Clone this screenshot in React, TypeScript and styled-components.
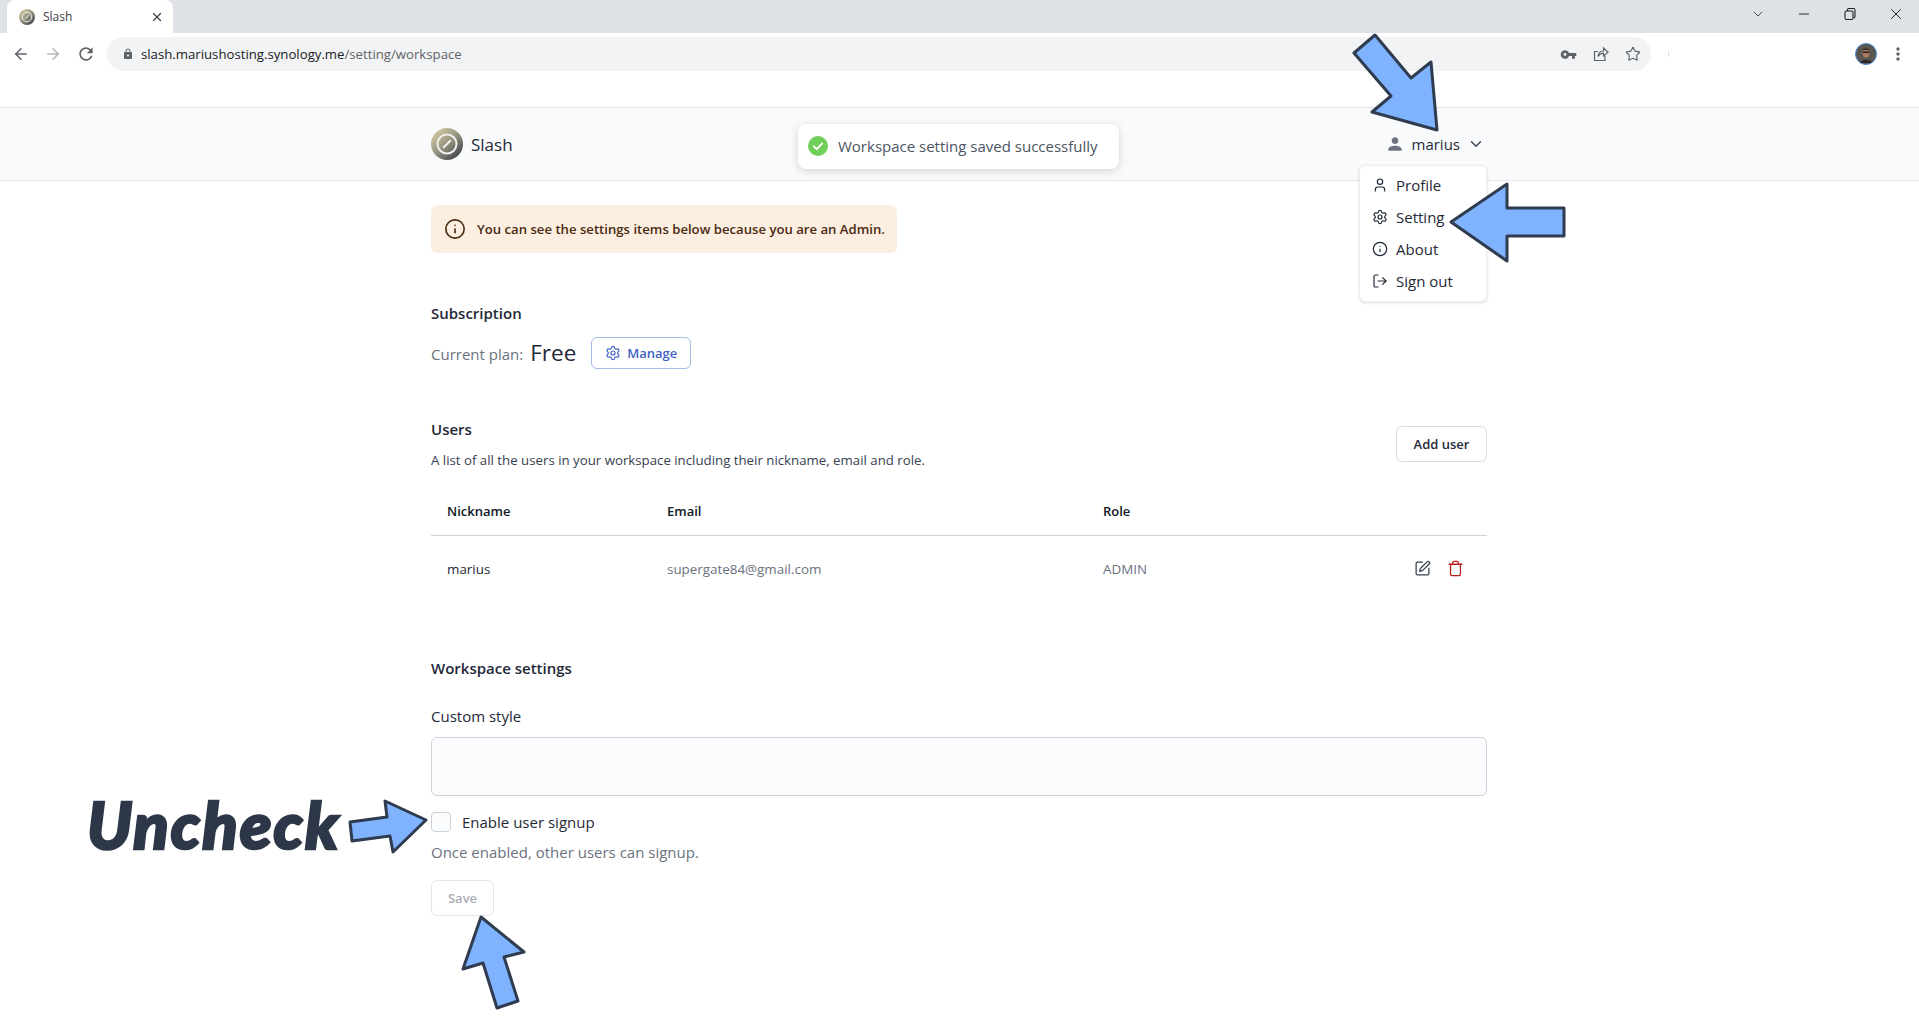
import React from "react";
import styled, { createGlobalStyle } from "styled-components";
import {
	ArrowLeft,
	ArrowRight,
	ChevronDown,
	Info,
	LogOut,
	Minus,
	Settings,
	SquarePen,
	Star,
	Trash,
	User,
	X,
} from "lucide-react";
import { MdLock, MdMoreVert, MdPerson, MdRefresh, MdVpnKey } from "react-icons/md";

const Logo = ({ size, id }: { size: number; id: string }) => (
	<svg width={size} height={size} viewBox="0 0 32 32">
		<defs>
			<linearGradient id={id} x1="0.15" y1="0.1" x2="0.85" y2="0.9">
				<stop offset="0" stopColor="#cfc5a0" />
				<stop offset="0.5" stopColor="#96937f" />
				<stop offset="1" stopColor="#42474d" />
			</linearGradient>
		</defs>
		<circle cx="16" cy="16" r="16" fill={`url(#${id})`} />
		<circle cx="16" cy="16" r="9.5" fill="none" stroke="#f0f0ec" strokeWidth="2" />
		<path d="M12.8 19.2 L19.2 12.8" stroke="#f0f0ec" strokeWidth="2" strokeLinecap="round" />
	</svg>
);

const App = () => {
	return (
		<Page>
			<GlobalStyle />
			<TabStrip>
				<Tab>
					<Logo size={16} id="favicon" />
					<TabTitle>Slash</TabTitle>
					<X size={14} color="#3c4043" strokeWidth={2.2} />
				</Tab>
				<WindowControls>
					<ChevronDown size={16} color="#3c4043" strokeWidth={1.4} />
					<Minus size={16} color="#202124" strokeWidth={1.4} />
					<svg width="14" height="14" viewBox="0 0 14 14" fill="none" stroke="#202124" strokeWidth="1.1">
						<rect x="2" y="4" width="8" height="8.5" rx="1.5" />
						<path d="M4.5 4V2.6A1.2 1.2 0 0 1 5.7 1.5H10.5A1.5 1.5 0 0 1 12 3V9.5A1 1 0 0 1 10.5 10.5" />
					</svg>
					<X size={18} color="#202124" strokeWidth={1.3} />
				</WindowControls>
			</TabStrip>

			<Toolbar>
				<NavIcons>
					<ArrowLeft size={18} color="#5f6368" strokeWidth={2.1} />
					<ArrowRight size={18} color="#b4b7bb" strokeWidth={2.1} />
					<MdRefresh size={20} color="#5f6368" />
				</NavIcons>
				<AddressBar>
					<MdLock size={12} color="#5f6368" />
					<Url>
						slash.mariushosting.synology.me<UrlPath>/setting/workspace</UrlPath>
					</Url>
					<AddressIcons>
						<MdVpnKey size={17} color="#5f6368" />
						<svg width="16" height="16" viewBox="0 0 16 16" fill="none" stroke="#5f6368" strokeWidth="1.2">
							<path d="M12 9.5V14.5H1.5V5.5H5" />
							<path d="M5 10.5C5.3 7 7.5 5 10.5 5V2L15 6.2L10.5 10V7.2C8.3 7.2 6.5 8.2 5 10.5Z" />
						</svg>
						<Star size={16} color="#5f6368" strokeWidth={1.7} />
					</AddressIcons>
				</AddressBar>
				<ExtensionSpeck />
				<ProfileIcons>
					<svg width="22" height="22" viewBox="0 0 22 22">
						<circle cx="11" cy="11" r="10.5" fill="#5a554f" stroke="#4a8ed8" strokeWidth="1" />
						<ellipse cx="11" cy="10" rx="3.6" ry="4.8" fill="#a87c60" />
						<path d="M7.2 8.5C6.8 4.3 15.2 4.3 14.8 8.5L14 7H8Z" fill="#2c2520" />
						<rect x="7.8" y="8.6" width="6.4" height="1.5" rx="0.7" fill="#1d1a18" />
						<path d="M5 20C6 15.5 16 15.5 17 20Z" fill="#2e2a28" />
					</svg>
					<MdMoreVert size={20} color="#5f6368" />
				</ProfileIcons>
			</Toolbar>

			<Header>
				<HeaderInner>
					<Brand>
						<Logo size={32} id="brand-logo" />
						Slash
					</Brand>
					<UserTrigger>
						<MdPerson size={20} color="#6b7280" />
						marius
						<ChevronDown size={18} color="#374151" strokeWidth={1.8} />
					</UserTrigger>
					<Menu>
						<MenuItem>
							<User size={16} strokeWidth={1.8} />
							Profile
						</MenuItem>
						<MenuItem>
							<Settings size={16} strokeWidth={1.8} />
							Setting
						</MenuItem>
						<MenuItem>
							<Info size={16} strokeWidth={1.8} />
							About
						</MenuItem>
						<MenuItem>
							<LogOut size={16} strokeWidth={1.8} />
							Sign out
						</MenuItem>
					</Menu>
				</HeaderInner>
			</Header>

			<Toast>
				<svg width="20" height="20" viewBox="0 0 20 20">
					<circle cx="10" cy="10" r="10" fill="#6fcf5a" />
					<path d="M5.8 10.3L8.8 13.2L14.2 7.3" fill="none" stroke="#fff" strokeWidth="1.8" strokeLinecap="round" strokeLinejoin="round" />
				</svg>
				Workspace setting saved successfully
			</Toast>

			<Main>
				<Banner>
					<Info size={22} color="#4a2a10" strokeWidth={1.8} />
					You can see the settings items below because you are an Admin.
				</Banner>

				<Subscription>
					<SectionTitle>Subscription</SectionTitle>
					<PlanRow>
						<PlanLabel>Current plan:</PlanLabel>
						<PlanName>Free</PlanName>
						<ManageButton>
							<Settings size={16} strokeWidth={1.8} />
							Manage
						</ManageButton>
					</PlanRow>
				</Subscription>

				<Users>
					<UsersHead>
						<div>
							<SectionTitle>Users</SectionTitle>
							<UsersNote>A list of all the users in your workspace including their nickname, email and role.</UsersNote>
						</div>
						<AddUserButton>Add user</AddUserButton>
					</UsersHead>
					<UsersTable>
						<thead>
							<tr>
								<HeadCell $width={236}>Nickname</HeadCell>
								<HeadCell $width={436}>Email</HeadCell>
								<HeadCell>Role</HeadCell>
								<HeadCell $width={110} />
							</tr>
						</thead>
						<tbody>
							<tr>
								<NameCell>marius</NameCell>
								<MutedCell>supergate84@gmail.com</MutedCell>
								<MutedCell>ADMIN</MutedCell>
								<ActionCell>
									<Actions>
										<SquarePen size={17} color="#374151" strokeWidth={1.8} />
										<Trash size={17} color="#b91c1c" strokeWidth={1.8} />
									</Actions>
								</ActionCell>
							</tr>
						</tbody>
					</UsersTable>
				</Users>

				<Workspace>
					<SectionTitle>Workspace settings</SectionTitle>
					<FieldLabel>Custom style</FieldLabel>
					<StyleInput />
					<CheckRow>
						<CheckBox />
						Enable user signup
					</CheckRow>
					<CheckHint>Once enabled, other users can signup.</CheckHint>
					<SaveButton>Save</SaveButton>
				</Workspace>
			</Main>

			<Arrow $left={1352} $top={33} width="88" height="100" viewBox="1352 33 88 100">
				<polygon points="1375,35 1411,78 1431,62 1437,130 1372,112 1391,96 1354,53" />
			</Arrow>
			<Arrow $left={1449} $top={182} width="117" height="81" viewBox="1449 182 117 81">
				<polygon points="1451,222 1507,184 1507,208 1564,208 1564,236 1507,236 1507,261" />
			</Arrow>
			<Arrow $left={348} $top={799} width="80" height="55" viewBox="348 799 80 55">
				<polygon points="426,820 385,801 387,817 350,822 352,841 390,836 393,852" />
			</Arrow>
			<Arrow $left={461} $top={915} width="65" height="95" viewBox="461 915 65 95">
				<polygon points="481,917 524,952 504,957 518,1001 497,1008 483,963 463,969" />
			</Arrow>
			<UncheckNote>Uncheck</UncheckNote>
		</Page>
	);
};

export default App;

const font = `"Open Sans", "Noto Sans", sans-serif`;

const GlobalStyle = createGlobalStyle`
	html, body {
		margin: 0;
		padding: 0;
		background: #fff;
		font-family: ${font};
		color: #1f2937;
	}
	* {
		box-sizing: border-box;
	}
`;

const Page = styled.div`
	position: relative;
	height: 1023px;
	overflow: hidden;
`;

const TabStrip = styled.div`
	height: 33px;
	background: #dee1e6;
	display: flex;
	justify-content: space-between;
	padding-left: 7px;
`;

const Tab = styled.div`
	width: 166px;
	background: #fff;
	border-radius: 8px 8px 0 0;
	display: flex;
	align-items: center;
	padding: 0 9px 0 12px;
	gap: 8px;
`;

const TabTitle = styled.span`
	flex: 1;
	font-size: 12px;
	color: #3c4043;
`;

const WindowControls = styled.div`
	display: grid;
	grid-template-columns: repeat(4, 46px);
	justify-items: center;
	align-items: center;
	height: 27px;
`;

const Toolbar = styled.div`
	height: 74px;
	display: flex;
	align-items: flex-start;
	padding-top: 4px;
`;

const NavIcons = styled.div`
	width: 107px;
	height: 34px;
	display: flex;
	align-items: center;
	padding-left: 12px;
	gap: 14px;
`;

const AddressBar = styled.div`
	width: 1544px;
	height: 34px;
	border-radius: 17px;
	background: #f1f3f4;
	display: flex;
	align-items: center;
	padding: 0 10px 0 15px;
	gap: 7px;
`;

const Url = styled.span`
	flex: 1;
	font-size: 13.2px;
	color: #202124;
`;

const UrlPath = styled.span`
	color: #5f6368;
`;

const AddressIcons = styled.div`
	display: flex;
	align-items: center;
	gap: 16px;
`;

const ExtensionSpeck = styled.div`
	width: 1px;
	height: 6px;
	margin: 14px 0 0 17px;
	background: #f3d9c8;
`;

const ProfileIcons = styled.div`
	margin-left: auto;
	height: 34px;
	display: flex;
	align-items: center;
	gap: 11px;
	padding-right: 11px;
`;

const Header = styled.header`
	height: 74px;
	background: #f9fafb;
	border-top: 1px solid #e0e2e6;
	border-bottom: 1px solid #e5e7eb;
`;

const HeaderInner = styled.div`
	position: relative;
	width: 1056px;
	height: 100%;
	margin-left: 431px;
	display: flex;
	align-items: center;
	justify-content: space-between;
`;

const Brand = styled.div`
	display: flex;
	align-items: center;
	gap: 8px;
	font-size: 17px;
	color: #1f2937;
`;

const UserTrigger = styled.div`
	display: flex;
	align-items: center;
	gap: 7px;
	padding-right: 2px;
	font-size: 15px;
	color: #1f2937;
`;

const Menu = styled.div`
	position: absolute;
	top: 57px;
	right: 0;
	width: 128px;
	height: 137px;
	padding: 3px 0 0 12px;
	background: #fff;
	border: 1px solid #eceef1;
	border-radius: 6px;
	box-shadow: 0 1px 3px rgba(0, 0, 0, 0.14);
	z-index: 2;
`;

const MenuItem = styled.div`
	height: 32px;
	display: flex;
	align-items: center;
	gap: 8px;
	font-size: 15px;
	color: #1f2937;
`;

const Toast = styled.div`
	position: absolute;
	top: 124px;
	left: 798px;
	width: 321px;
	height: 45px;
	padding: 0 0 2px 10px;
	display: flex;
	align-items: center;
	gap: 10px;
	background: #fff;
	border-radius: 8px;
	box-shadow: 0 2px 8px rgba(0, 0, 0, 0.16);
	font-size: 15px;
	color: #4b5563;
`;

const Main = styled.main`
	width: 1056px;
	margin-left: 431px;
	padding-top: 24px;
	display: flex;
	flex-direction: column;
	align-items: stretch;
`;

const Banner = styled.div`
	width: 466px;
	height: 48px;
	padding-left: 13px;
	display: flex;
	align-items: center;
	gap: 11px;
	background: #fcefe1;
	border-radius: 6px;
	font-size: 13.15px;
	font-weight: 600;
	color: #4a2a10;
`;

const Subscription = styled.section`
	margin-top: 48px;
`;

const SectionTitle = styled.h2`
	margin: 0;
	font-size: 15px;
	line-height: 24px;
	font-weight: 600;
	color: #1f2937;
`;

const PlanRow = styled.div`
	margin-top: 12px;
	display: flex;
	align-items: center;
	height: 31px;
`;

const PlanLabel = styled.span`
	font-size: 15px;
	color: #6b7280;
	padding-top: 3px;
`;

const PlanName = styled.span`
	margin-left: 7px;
	font-size: 22.5px;
	color: #1f2937;
`;

const Button = styled.button`
	font-family: ${font};
	font-size: 13px;
	font-weight: 600;
	background: #fff;
	border-radius: 6px;
`;

const ManageButton = styled(Button)`
	margin-left: 15px;
	width: 100px;
	height: 32px;
	display: flex;
	align-items: center;
	justify-content: center;
	gap: 6px;
	color: #3f63c2;
	border: 1px solid #a3bde8;
`;

const Users = styled.section`
	margin-top: 49px;
`;

const UsersHead = styled.div`
	display: flex;
	align-items: center;
	justify-content: space-between;
`;

const UsersNote = styled.p`
	margin: 9px 0 0;
	font-size: 13.25px;
	line-height: 20px;
	color: #374151;
`;

const AddUserButton = styled(Button)`
	width: 91px;
	height: 36px;
	color: #1f2937;
	border: 1px solid #d9dce1;
`;

const UsersTable = styled.table`
	width: 100%;
	margin-top: 17px;
	border-collapse: collapse;
	table-layout: fixed;
`;

const HeadCell = styled.th<{ $width?: number }>`
	width: ${(p) => (p.$width ? `${p.$width}px` : "auto")};
	height: 48px;
	padding: 0;
	text-align: left;
	font-size: 13px;
	font-weight: 600;
	color: #111827;
	border-bottom: 1px solid #d1d5db;

	&:first-child {
		padding-left: 16px;
	}
`;

const NameCell = styled.td`
	height: 67px;
	padding: 0 0 0 16px;
	font-size: 13.4px;
	color: #1f2937;
`;

const MutedCell = styled.td`
	padding: 0;
	font-size: 13.4px;
	color: #6b7280;
`;

const ActionCell = styled.td`
	padding: 0 23px 0 0;
`;

const Actions = styled.div`
	display: flex;
	justify-content: flex-end;
	gap: 16px;
`;

const Workspace = styled.section`
	margin-top: 54px;
`;

const FieldLabel = styled.div`
	margin-top: 24px;
	font-size: 15px;
	line-height: 24px;
	color: #1f2937;
`;

const StyleInput = styled.div`
	margin-top: 9px;
	height: 59px;
	background: #fbfcfd;
	border: 1px solid #cdd1d8;
	border-radius: 6px;
`;

const CheckRow = styled.label`
	margin-top: 16px;
	display: flex;
	align-items: center;
	gap: 11px;
	font-size: 15px;
	line-height: 20px;
	color: #1f2937;
`;

const CheckBox = styled.span`
	width: 20px;
	height: 20px;
	background: #fbfcfd;
	border: 1px solid #cdd1d8;
	border-radius: 4px;
`;

const CheckHint = styled.p`
	margin: 9px 0 0;
	font-size: 15px;
	line-height: 22px;
	color: #6b7280;
`;

const SaveButton = styled(Button)`
	display: block;
	margin-top: 17px;
	width: 63px;
	height: 36px;
	color: #a8adb5;
	border: 1px solid #e5e7eb;
`;

const Arrow = styled.svg<{ $left: number; $top: number }>`
	position: absolute;
	left: ${(p) => p.$left}px;
	top: ${(p) => p.$top}px;
	z-index: 3;

	polygon {
		fill: #7fb2ff;
		stroke: #2f3b4e;
		stroke-width: 3;
		stroke-linejoin: round;
	}
`;

const UncheckNote = styled.div`
	position: absolute;
	left: 87px;
	top: 785px;
	font-family: Lato, sans-serif;
	font-size: 65px;
	line-height: 78px;
	font-weight: 900;
	font-style: italic;
	letter-spacing: 2px;
	color: #2d3748;
	-webkit-text-stroke: 2.5px #2d3748;
`;
